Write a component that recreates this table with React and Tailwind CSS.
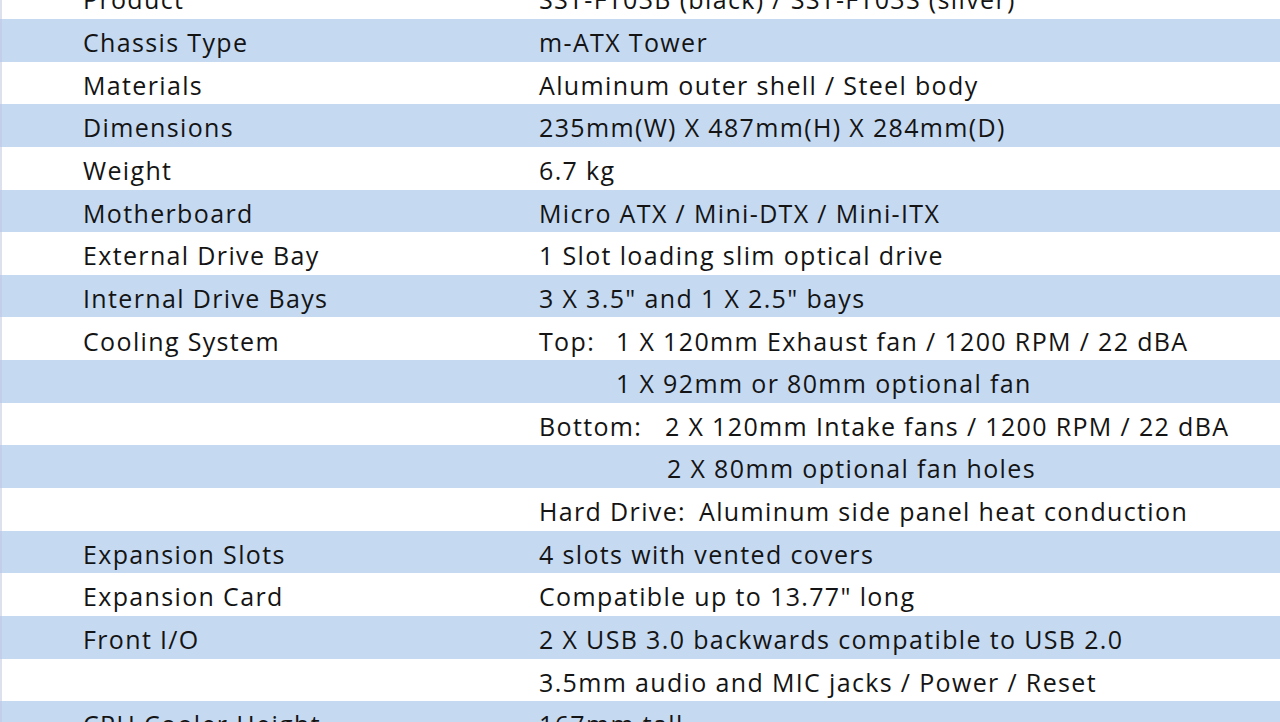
const rows = [
  { label: "Product", value: "SST-FT03B (black) / SST-FT03S (silver)" },
  { label: "Chassis Type", value: "m-ATX Tower" },
  { label: "Materials", value: "Aluminum outer shell / Steel body" },
  { label: "Dimensions", value: "235mm(W) X 487mm(H) X 284mm(D)" },
  { label: "Weight", value: "6.7 kg" },
  { label: "Motherboard", value: "Micro ATX / Mini-DTX / Mini-ITX" },
  { label: "External Drive Bay", value: "1 Slot loading slim optical drive" },
  { label: "Internal Drive Bays", value: '3 X 3.5" and 1 X 2.5" bays' },
  { label: "Cooling System", lead: "Top:", indent: "w-[77px]", value: "1 X 120mm Exhaust fan / 1200 RPM / 22 dBA" },
  { label: "", indent: "w-[77px]", value: "1 X 92mm or 80mm optional fan" },
  { label: "", lead: "Bottom:", indent: "w-[126px]", value: "2 X 120mm Intake fans / 1200 RPM / 22 dBA" },
  { label: "", indent: "w-[128px]", value: "2 X 80mm optional fan holes" },
  { label: "", lead: "Hard Drive:", indent: "w-[160px]", value: "Aluminum side panel heat conduction" },
  { label: "Expansion Slots", value: "4 slots with vented covers" },
  { label: "Expansion Card", value: 'Compatible up to 13.77" long' },
  { label: "Front I/O", value: "2 X USB 3.0 backwards compatible to USB 2.0" },
  { label: "", value: "3.5mm audio and MIC jacks / Power / Reset" },
  { label: "CPU Cooler Height", value: "167mm tall" },
];

export default function App() {
  return (
    <div className="h-[722px] w-[1280px] overflow-hidden bg-white font-['Open_Sans',sans-serif] text-[25px] tracking-[1.35px] text-[#141414] [font-variant-ligatures:none]">
      <div className="-mt-[23.65px]">
        {rows.map((row, i) => {
          const blue = i % 2 === 1;
          return (
            <div
              key={i}
              className={
                blue
                  ? "flex h-[42.65px] items-center border-l-2 border-[#c3cfea] bg-[#c5d9f1] pt-[5px]"
                  : "flex h-[42.65px] items-center border-l-2 border-[#dde1ee] bg-white pt-[5px]"
              }
            >
              <div className="w-[537px] shrink-0 pl-[81px] whitespace-nowrap">{row.label}</div>
              <div className="flex whitespace-nowrap">
                {row.indent && <span className={`${row.indent} shrink-0`}>{row.lead}</span>}
                <span>{row.value}</span>
              </div>
            </div>
          );
        })}
      </div>
    </div>
  );
}
